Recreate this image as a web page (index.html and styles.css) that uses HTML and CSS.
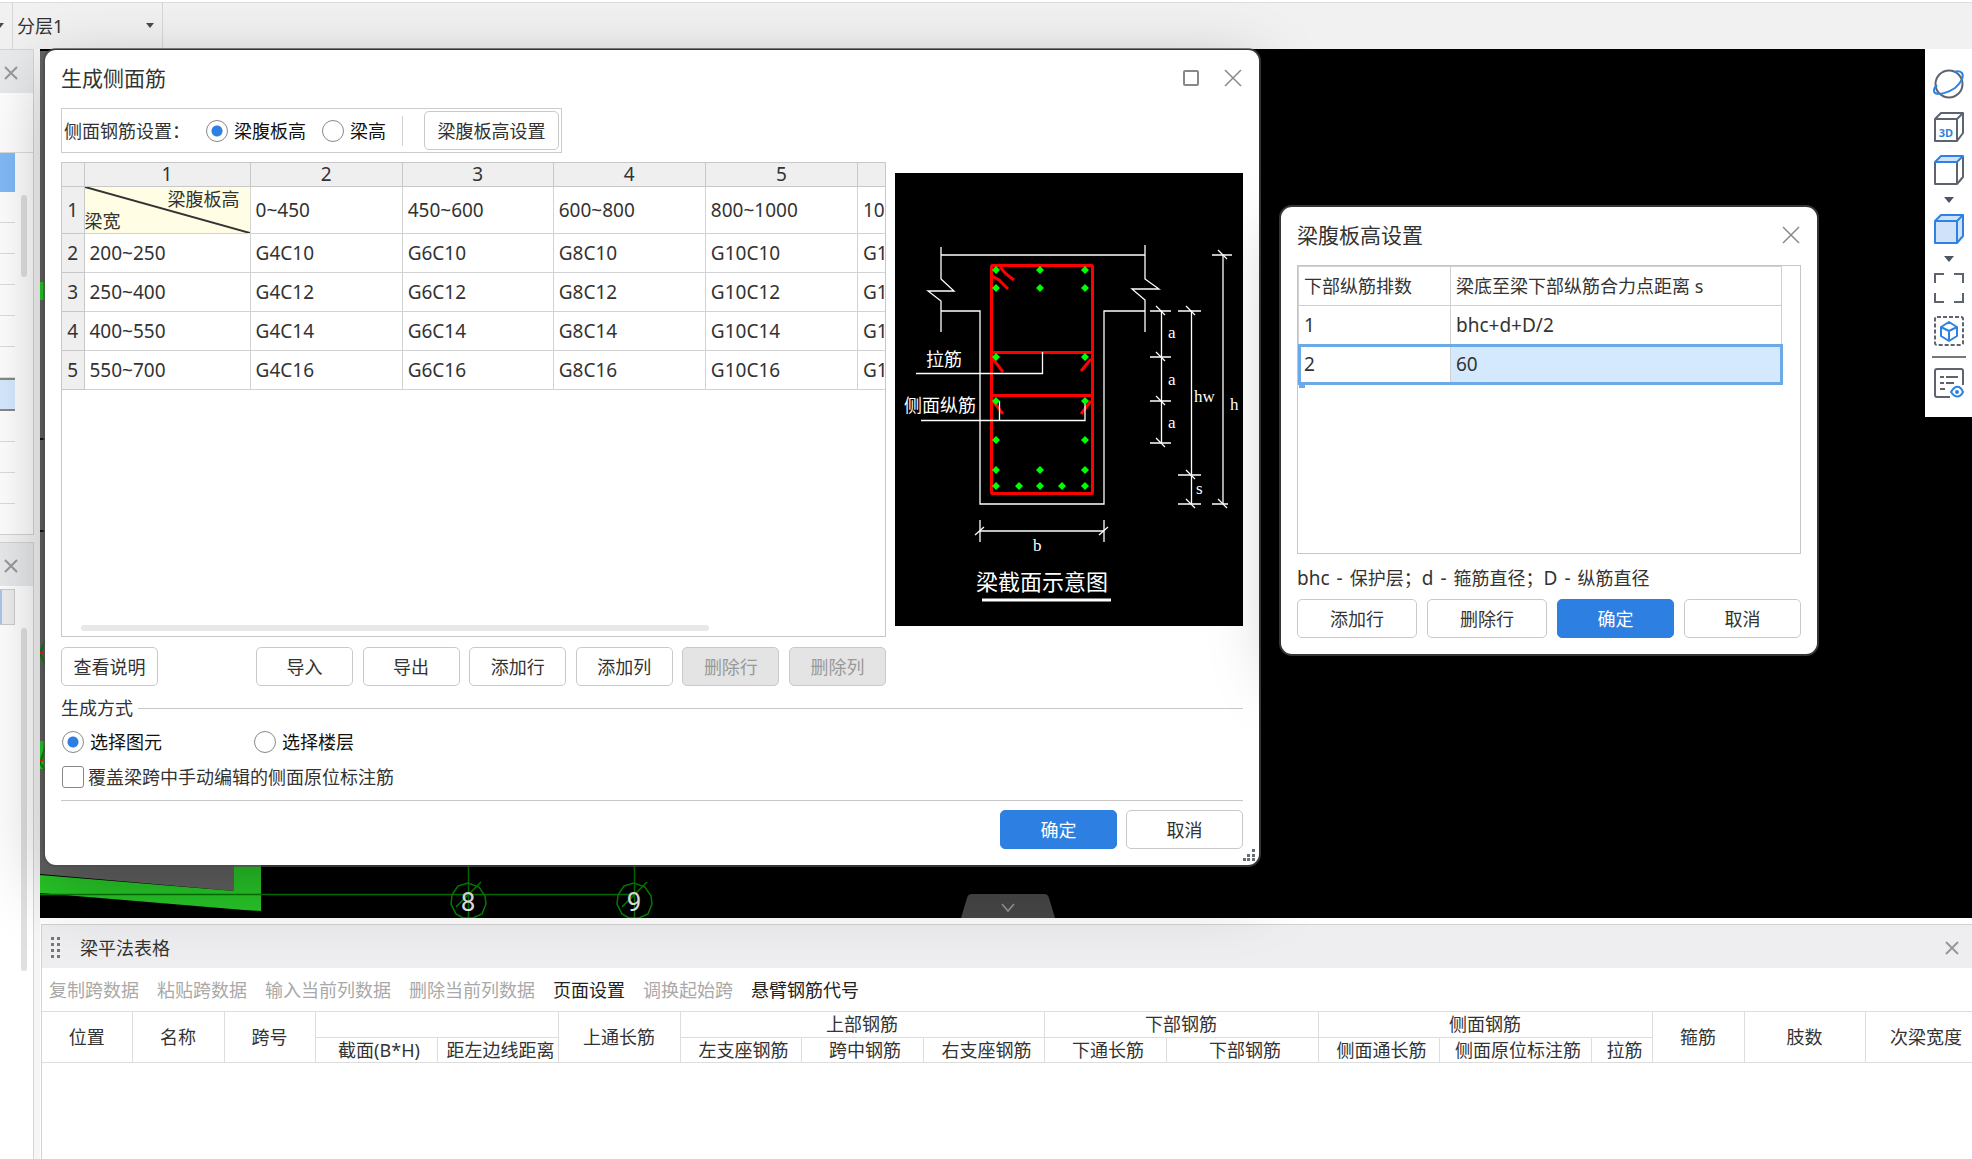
FILE: index.html
```html
<!DOCTYPE html>
<html lang="zh-CN">
<head>
<meta charset="utf-8">
<title>生成侧面筋</title>
<link rel="stylesheet" href="styles.css">
</head>
<body>
<div class="app">
  <header class="topbar">
    <span class="combo-end"><svg width="8" height="5" viewBox="0 0 8 5"><path d="M0 0h8L4 5z" fill="#444b57"/></svg></span>
    <label class="combo">
      <select aria-label="分层"><option>分层1</option></select>
      <svg width="8" height="5" viewBox="0 0 8 5"><path d="M0 0h8L4 5z" fill="#444b57"/></svg>
    </label>
  </header>

  <div class="workspace">
    <aside class="dock">
      <section class="dock-panel dock-upper">
        <div class="dock-head"><button class="x-btn" aria-label="关闭"><svg width="14" height="14" viewBox="0 0 14 14"><path d="M1 1l12 12M13 1L1 13"/></svg></button></div>
        <div class="dock-body">
          <div class="dock-list">
            <div class="gap"></div><div class="on"></div><div></div><div></div><div></div><div></div><div></div><div></div><div class="cur"></div><div></div><div></div><div></div>
          </div>
          <div class="scroll-v short"></div>
        </div>
      </section>
      <section class="dock-panel dock-lower">
        <div class="dock-head"><button class="x-btn" aria-label="关闭"><svg width="14" height="14" viewBox="0 0 14 14"><path d="M1 1l12 12M13 1L1 13"/></svg></button></div>
        <div class="dock-body">
          <div class="dock-tool"></div>
          <div class="scroll-v long"></div>
        </div>
      </section>
    </aside>

    <main class="center">
      <div class="viewport">
        <svg class="drawing" width="640" height="867" viewBox="0 0 640 867">
          <path d="M0 0H194V840L0 823z" fill="#626262"/>
          <path d="M0 231h8v18H0zM0 690h8v28H0z" fill="#28c828"/>
          <path d="M0 388h6M0 480h6" stroke="#111" stroke-width="2"/>
          <path d="M6 588L0 602l6 14M6 694l-6 18 6 8" fill="none" stroke="#0a7a0a" stroke-width="2"/>
          <path d="M0 602h3M0 709h3" stroke="#e02020" stroke-width="2"/>
          <path d="M0 824L194 840V800H221V860L204 859L0 842z" fill="#28c828"/>
          <g fill="none" stroke="#008a00" stroke-width="1.500">
            <path d="M0 843.500H594M428.500 800V867M594.500 800V867" stroke="#007800"/>
            <path d="M418 835l10-3 11 4 6 9 1 8-4 10-9 4h-10l-7-4-5-10 1-9zM416 856l25-25"/>
            <path d="M584 835l10-3 11 4 6 9 1 8-4 10-9 4h-10l-7-4-5-10 1-9zM582 856l25-25"/>
          </g>
          <text x="428" y="860" class="axis-no">8</text>
          <text x="594" y="860" class="axis-no">9</text>
        </svg>
        <button class="collapse" aria-label="收起"><svg width="94" height="24" viewBox="0 0 94 24"><path d="M0 24L6 4Q7 0 11 0H83Q87 0 88 4L94 24z" fill="#484848"/><path d="M41 10l6 7 6-7" fill="none" stroke="#999" stroke-width="1.500"/></svg></button>
        <nav class="view-tools" aria-label="视图">
          <button aria-label="动态观察"><svg width="34" height="32" viewBox="0 0 34 32"><g fill="none" stroke-width="2"><circle cx="17" cy="16" r="13.500" stroke="#5d6470"/><path d="M5 17c-3 3-4 6-2 8 4 2 13 0 20-5 7-6 9-12 7-15-2-2-5-2-8-1" stroke="#2d82e4"/></g></svg></button>
          <button aria-label="三维"><svg width="34" height="32" viewBox="0 0 34 32"><path d="M3 8h22v22H3zM3 8l6-6h22l-6 6M31 2v20l-6 8" fill="none" stroke="#5d6470" stroke-width="2" stroke-linejoin="round"/><text x="14" y="26" class="icon-3d">3D</text></svg></button>
          <button aria-label="俯视"><svg width="34" height="32" viewBox="0 0 34 32"><g stroke-width="2" stroke-linejoin="round"><path d="M3 8v22h22V8M31 3v20l-6 7" fill="none" stroke="#5d6470"/><path d="M3 8l6-6h22l-6 6z" fill="#cfe2fa" stroke="#2d82e4"/></g></svg></button>
          <button class="drop" aria-label="更多视角"><svg width="10" height="6" viewBox="0 0 10 6"><path d="M0 0h10L5 6z" fill="#4d5563"/></svg></button>
          <button aria-label="着色"><svg width="34" height="32" viewBox="0 0 34 32"><path d="M3 8l6-6h22v21l-6 7H3zM3 8h22v22M25 8l6-6" fill="#cfe2fa" stroke="#2d82e4" stroke-width="2" stroke-linejoin="round"/></svg></button>
          <button class="drop" aria-label="更多样式"><svg width="10" height="6" viewBox="0 0 10 6"><path d="M0 0h10L5 6z" fill="#4d5563"/></svg></button>
          <button aria-label="全屏"><svg width="34" height="32" viewBox="0 0 34 32"><path d="M3 11V2h9M22 2h9v9M31 21v9h-9M12 30H3v-9" fill="none" stroke="#5d6470" stroke-width="2"/></svg></button>
          <button aria-label="局部三维"><svg width="34" height="32" viewBox="0 0 34 32"><rect x="3" y="2" width="28" height="28" rx="2" fill="none" stroke="#5d6470" stroke-width="2" stroke-dasharray="4 2"/><path d="M17 7l8 5v9l-8 5-8-5v-9zM9 12l8 4 8-4M17 16v10" fill="none" stroke="#2d82e4" stroke-width="2" stroke-linejoin="round"/></svg></button>
          <hr>
          <button aria-label="显示设置"><svg width="34" height="32" viewBox="0 0 34 32"><path d="M18 30H5q-2 0-2-2V4q0-2 2-2h24q2 0 2 2v14M8 10h4M14 10h12M8 16h4M14 16h8M8 22h5" fill="none" stroke="#5d6470" stroke-width="2"/><path d="M19 25c4-7 9-7 12 0-3 6-8 6-12 0z" fill="none" stroke="#2d82e4" stroke-width="2"/><circle cx="25" cy="25" r="2" fill="#2d82e4"/></svg></button>
        </nav>
      </div>

      <section class="sheet">
        <div class="sheet-head">
          <svg width="10" height="22" viewBox="0 0 10 22" fill="#777"><path d="M0 0h3v3H0zM6 0h3v3H6zM0 6h3v3H0zM6 6h3v3H6zM0 12h3v3H0zM6 12h3v3H6zM0 18h3v3H0zM6 18h3v3H6z"/></svg>
          <h2>梁平法表格</h2>
          <button class="x-btn" aria-label="关闭"><svg width="14" height="14" viewBox="0 0 14 14"><path d="M1 1l12 12M13 1L1 13"/></svg></button>
        </div>
        <div class="sheet-tools">
          <button disabled>复制跨数据</button><button disabled>粘贴跨数据</button><button disabled>输入当前列数据</button><button disabled>删除当前列数据</button><button>页面设置</button><button disabled>调换起始跨</button><button>悬臂钢筋代号</button>
        </div>
        <div class="sheet-scroll">
          <table>
            <colgroup><col class="w90"><col class="w92"><col class="w91"><col class="w122"><col class="w121"><col class="w122"><col class="w121"><col class="w122"><col class="w121"><col class="w122"><col class="w152"><col class="w121"><col class="w152"><col class="w61"><col class="w92"><col class="w121"><col class="w122"></colgroup>
            <thead>
              <tr><th rowspan="2">位置</th><th rowspan="2">名称</th><th rowspan="2">跨号</th><th colspan="2"></th><th rowspan="2">上通长筋</th><th colspan="3">上部钢筋</th><th colspan="2">下部钢筋</th><th colspan="3">侧面钢筋</th><th rowspan="2">箍筋</th><th rowspan="2">肢数</th><th rowspan="2">次梁宽度</th></tr>
              <tr class="sub"><th>截面(B*H)</th><th>距左边线距离</th><th>左支座钢筋</th><th>跨中钢筋</th><th>右支座钢筋</th><th>下通长筋</th><th>下部钢筋</th><th>侧面通长筋</th><th>侧面原位标注筋</th><th>拉筋</th></tr>
            </thead>
          </table>
        </div>
      </section>
    </main>
  </div>

  <section class="dialog dialog-main" role="dialog" aria-labelledby="t1">
    <div class="titlebar">
      <h1 id="t1">生成侧面筋</h1>
      <button class="max-btn" aria-label="最大化"></button>
      <button class="x-btn" aria-label="关闭"><svg width="18" height="18" viewBox="0 0 18 18"><path d="M1 1l16 16M17 1L1 17"/></svg></button>
    </div>
    <div class="options">
      <span class="options-name">侧面钢筋设置：</span>
      <label class="choice"><input type="radio" name="mode" checked>梁腹板高</label>
      <label class="choice"><input type="radio" name="mode">梁高</label>
      <i class="sep"></i>
      <button class="btn wide">梁腹板高设置</button>
    </div>
    <div class="body">
      <div class="left">
        <div class="grid-frame">
          <table class="grid">
            <colgroup><col class="c-no"><col class="c-first"><col class="w152"><col class="w151"><col class="w152"><col class="w152"><col class="w152"></colgroup>
            <thead><tr><th></th><th>1</th><th>2</th><th>3</th><th>4</th><th>5</th><th></th></tr></thead>
            <tbody>
              <tr class="first"><th>1</th><td class="corner"><svg class="slash" viewBox="0 0 165 46" preserveAspectRatio="none"><path d="M0 0L165 46"/></svg><div><span class="across">梁腹板高</span><span>梁宽</span></div></td><td>0~450</td><td>450~600</td><td>600~800</td><td>800~1000</td><td>1000~1200</td></tr>
              <tr><th>2</th><td>200~250</td><td>G4C10</td><td>G6C10</td><td>G8C10</td><td>G10C10</td><td>G12C10</td></tr>
              <tr><th>3</th><td>250~400</td><td>G4C12</td><td>G6C12</td><td>G8C12</td><td>G10C12</td><td>G12C12</td></tr>
              <tr><th>4</th><td>400~550</td><td>G4C14</td><td>G6C14</td><td>G8C14</td><td>G10C14</td><td>G12C14</td></tr>
              <tr><th>5</th><td>550~700</td><td>G4C16</td><td>G6C16</td><td>G8C16</td><td>G10C16</td><td>G12C16</td></tr>
            </tbody>
          </table>
          <div class="scroll-h"></div>
        </div>
        <div class="actions">
          <button class="btn">查看说明</button>
          <div class="edit-actions"><button class="btn">导入</button><button class="btn">导出</button><button class="btn">添加行</button><button class="btn">添加列</button><button class="btn" disabled>删除行</button><button class="btn" disabled>删除列</button></div>
        </div>
      </div>
      <svg class="figure" width="348" height="453" viewBox="0 0 348 453" role="img" aria-label="梁截面示意图">
        <rect width="348" height="453" fill="#000"/>
        <g fill="none" stroke="#fff" stroke-width="1.300">
          <path d="M46 74V106L59 118H33L46 128V159M250 72V106L264 116H237L250 127V159M46 82H250M46 138H85V331H209V138H250"/>
        </g>
        <g fill="none" stroke="#f00" stroke-width="3">
          <rect x="96.500" y="92.500" width="101" height="228" rx="1"/>
          <path d="M96 179.500H197M96 222.500H197"/>
          <path d="M105 94l6 7 8 6M97 103l7 4 9 9M98 186l10 13M196 186l-10 12M98 228l10 13M196 228l-10 13"/>
        </g>
        <g fill="none" stroke="#fff" stroke-width="1.300">
          <path d="M21 200.500H147.500V179M26 247.500H190V228M104.500 247V228"/>
          <path d="M266.500 138V270M296.500 138V331M328 82V331M85 358H209M85 347v22M209 347v22"/>
          <path d="M255 138h21M255 184h21M255 228h21M255 270h21M283 138h23M283 302h23M283 331h23M317 82h20M317 331h16"/>
          <path d="M261 133l9 9M261 179l9 9M261 223l9 9M261 265l9 9M291 133l9 9M291 297l9 9M291 326l9 9M323 77l9 9M323 326l9 9M80 362l9-8M204 362l9-8"/>
        </g>
        <path d="M87 427H216" stroke="#fff" stroke-width="3"/>
        <g fill="#0f0">
          <path d="M101 93l4 4-4 4-4-4zM145 93l4 4-4 4-4-4zM190 93l4 4-4 4-4-4zM101 111l4 4-4 4-4-4zM145 111l4 4-4 4-4-4zM190 111l4 4-4 4-4-4z"/>
          <path d="M101 180l4 4-4 4-4-4zM190 180l4 4-4 4-4-4zM101 224l4 4-4 4-4-4zM190 224l4 4-4 4-4-4zM101 263l4 4-4 4-4-4zM190 263l4 4-4 4-4-4z"/>
          <path d="M101 293l4 4-4 4-4-4zM145 293l4 4-4 4-4-4zM190 293l4 4-4 4-4-4zM101 309l4 4-4 4-4-4zM124 309l4 4-4 4-4-4zM145 309l4 4-4 4-4-4zM167 309l4 4-4 4-4-4zM190 309l4 4-4 4-4-4z"/>
        </g>
        <g class="fig-cn"><text x="31" y="193">拉筋</text><text x="9" y="239">侧面纵筋</text><text x="81" y="417" class="fig-title">梁截面示意图</text></g>
        <g class="fig-dim"><text x="273" y="165">a</text><text x="273" y="212">a</text><text x="273" y="255">a</text><text x="299" y="229">hw</text><text x="335" y="237">h</text><text x="301" y="321">s</text><text x="138" y="378">b</text></g>
      </svg>
    </div>
    <fieldset class="how">
      <legend>生成方式</legend>
      <div class="how-row">
        <label class="choice"><input type="radio" name="how" checked>选择图元</label>
        <label class="choice"><input type="radio" name="how">选择楼层</label>
      </div>
      <label class="choice tick"><input type="checkbox">覆盖梁跨中手动编辑的侧面原位标注筋</label>
    </fieldset>
    <div class="footer"><button class="btn primary">确定</button><button class="btn big">取消</button></div>
    <svg class="grip" width="12" height="12" viewBox="0 0 12 12" fill="#666d76"><path d="M9 0h3v3H9zM9 5h3v3H9zM4 5h3v3H4zM9 9h3v3H9zM4 9h3v3H4zM0 9h3v3H0z"/></svg>
  </section>

  <section class="dialog dialog-set" role="dialog" aria-labelledby="t2">
    <div class="titlebar">
      <h1 id="t2">梁腹板高设置</h1>
      <button class="x-btn" aria-label="关闭"><svg width="18" height="18" viewBox="0 0 18 18"><path d="M1 1l16 16M17 1L1 17"/></svg></button>
    </div>
    <div class="set-frame">
      <table class="set">
        <thead><tr><th>下部纵筋排数</th><th>梁底至梁下部纵筋合力点距离 s</th></tr></thead>
        <tbody>
          <tr><td>1</td><td>bhc+d+D/2</td></tr>
          <tr class="picked"><td>2</td><td>60</td></tr>
        </tbody>
      </table>
      <i class="handle"></i>
    </div>
    <p class="note"><span><b>bhc</b><b>-</b>保护层；</span><span><b>d</b><b>-</b>箍筋直径；</span><span><b>D</b><b>-</b>纵筋直径</span></p>
    <div class="set-actions"><button class="btn">添加行</button><button class="btn">删除行</button><button class="btn primary">确定</button><button class="btn">取消</button></div>
  </section>
</div>
</body>
</html>
```
FILE: styles.css
```css
* { box-sizing: border-box; }
body { margin: 0; font: 18px/24px "Noto Sans", "Noto Sans CJK SC", sans-serif; color: #333; background: #fff; }
button, select, input { font: inherit; color: inherit; margin: 0; }
button { padding: 0; border: 0; background: none; white-space: nowrap; }
h1, h2, p { margin: 0; font-weight: 400; }
svg { display: block; flex: none; }
table { border-collapse: collapse; table-layout: fixed; }
th, td { padding: 0; font-weight: 400; white-space: nowrap; }

.app { position: relative; display: flex; flex-direction: column; min-height: 100vh; overflow: hidden; }

.topbar { display: flex; height: 49px; background: #f1f1f1; border-top: 2px solid #fff; box-shadow: inset 0 1px #ddd; }
.combo-end { display: flex; align-items: center; width: 13px; border-right: 1px solid #d6d6d6; overflow: hidden; }
.combo-end svg { margin-left: -4px; }
.combo { display: flex; align-items: center; width: 150px; padding: 0 8px 0 4px; border-right: 1px solid #d6d6d6; }
.combo select { flex: 1; appearance: none; border: 0; background: none; padding: 0; }

.workspace { display: flex; flex: 1; }
.dock { display: flex; flex-direction: column; gap: 7px; width: 40px; background: #f6f6f6; }
.dock-panel { width: 34px; border: 1px solid #d5d5d5; border-left: 0; background: #fff; }
.dock-upper { height: 486px; }
.dock-lower { flex: 1; border-bottom: 0; }
.dock-head { display: flex; align-items: center; height: 43px; padding: 2px 0 0 4px; background: #e9eaec; }
.x-btn svg { fill: none; stroke: #999; stroke-width: 2; }
.dock-body { display: flex; justify-content: space-between; padding-right: 6px; }
.dock-list { width: 15px; }
.dock-list div { height: 31px; border-bottom: 1px solid #ddd; }
.dock-list .gap { width: 33px; height: 60px; }
.dock-list .on { height: 39px; background: #82bbf8; border: 0; }
.dock-list .cur { height: 33px; background: #d6eaff; border-top: 2px solid #888; border-bottom: 2px solid #888; }
.scroll-v { width: 6px; border-radius: 3px; background: #e0e0e0; }
.scroll-v.short { height: 82px; margin-top: 102px; }
.scroll-v.long { height: 343px; margin-top: 42px; }
.dock-tool { width: 15px; height: 36px; margin-top: 3px; border: 1px solid #ccc; border-left: 2px solid #a9c6ea; background: #eee; }

.center { display: flex; flex: 1; flex-direction: column; min-width: 0; }
.viewport { position: relative; flex: 1; margin-bottom: 6px; background: #000; }
.drawing { position: absolute; left: 0; bottom: 0; }
.axis-no { font: 26px Roboto, sans-serif; fill: #eee; text-anchor: middle; }
.collapse { position: absolute; left: 50%; bottom: 0; margin-left: -45px; }
.view-tools { position: absolute; right: 0; top: 0; display: flex; flex-direction: column; align-items: center; gap: 11px; width: 47px; padding: 19px 0 18px; background: #fff; }
.view-tools .drop { height: 5px; }
.view-tools hr { width: 34px; height: 2px; margin: -2px 0; border: 0; background: #777; }
.icon-3d { font: bold 11px "Noto Sans", sans-serif; fill: #2d82e4; text-anchor: middle; }

.sheet { height: 235px; margin-left: 1px; border: 1px solid #d2d2d2; border-right: 0; border-bottom: 0; background: #fff; }
.sheet-head { display: flex; align-items: center; height: 43px; padding: 2px 13px 0 9px; background: #eeeef0; }
.sheet-head h2 { flex: 1; margin-left: 19px; font-size: 18px; }
.sheet-tools { display: flex; align-items: center; gap: 18px; height: 43px; padding-left: 7px; overflow: hidden; }
.sheet-tools button { color: #222; }
.sheet-tools button:disabled { color: #a9a9a9; }
.sheet-scroll { overflow: hidden; border-top: 1px solid #ddd; }
.sheet table { width: 1945px; }
.sheet th { height: 25px; line-height: 24px; border: 1px solid #ddd; border-top: 0; border-left: 0; }
.sheet .sub th { padding-left: 6px; }
.w61 { width: 61px; } .w90 { width: 90px; } .w91 { width: 91px; } .w92 { width: 92px; } .w121 { width: 121px; } .w122 { width: 122px; } .w151 { width: 151px; } .w152 { width: 152px; }

.dialog { position: absolute; background: #fff; border-radius: 11px; box-shadow: 0 0 0 2px rgba(75, 75, 75, .7), 0 22px 70px rgba(0, 0, 0, .28); }
.dialog-main { left: 45px; top: 50px; width: 1214px; padding: 0 16px 16px; }
.dialog-set { left: 1281px; top: 207px; width: 536px; padding: 0 16px 16px; }
.titlebar { display: flex; align-items: center; height: 58px; padding-bottom: 3px; }
.titlebar h1 { flex: 1; font-size: 21px; line-height: 30px; }
.titlebar .x-btn { margin-right: 1px; }
.titlebar svg { stroke-width: 1.5; stroke: #888; }
.max-btn { width: 16px; height: 16px; margin-right: 25px; border: 2px solid #888; border-radius: 2px; }

.btn { width: 97px; height: 39px; border: 1px solid #c9c9c9; border-radius: 5px; background: #fff; color: #333; }
.btn:disabled { background: #e4e4e4; color: #999; }
.btn.wide { width: 135px; }
.btn.big { width: 117px; }
.btn.primary { width: 117px; border-color: #2d7fe2; background: #2d7fe2; color: #fff; }

.options { display: flex; align-items: center; width: 501px; height: 45px; padding: 0 2px; border: 1px solid #c8cdd2; }
.options-name { width: 142px; }
.choice { display: flex; align-items: center; gap: 6px; height: 22px; color: #111; white-space: nowrap; }
.options .choice { margin-right: 16px; }
.choice input { appearance: none; flex: none; width: 22px; height: 22px; border: 1px solid #888; border-radius: 50%; background: #fff; }
.choice input:checked { background: radial-gradient(circle, #2d7fe2 5px, #fff 6px); }
.choice input[type="checkbox"] { border-radius: 3px; }
.sep { width: 1px; height: 30px; margin-right: auto; background: #d0d0d0; }

.body { display: flex; gap: 9px; margin-top: 9px; }
.left { flex: 1; min-width: 0; }
.figure { margin-top: 11px; }
.grid-frame { display: flex; flex-direction: column; height: 475px; border: 1px solid #c8c8c8; overflow: hidden; }
.grid { width: 948px; font-size: 19px; }
.c-no { width: 22px; }
.c-first { width: 166px; }
.grid th { border: 1px solid #c8c8c8; background: #efefef; }
.grid thead th { height: 23px; line-height: 22px; border-top: 0; }
.grid th:first-child { border-left: 0; }
.grid td { height: 39px; padding-left: 5px; border: 1px solid #d3d3d3; }
.grid .first td { height: 47px; }
.grid .first .corner { position: relative; padding: 0; background: #fffde3; }
.slash { position: absolute; left: 0; top: 0; width: 100%; height: 100%; fill: none; stroke: #333; stroke-width: 2; }
.corner div { display: flex; flex-direction: column; font-size: 18px; line-height: 22px; }
.corner .across { align-self: flex-end; padding-right: 10px; }
.scroll-h { width: 628px; height: 6px; margin: auto 0 5px 19px; border-radius: 3px; background: #e8e8e8; }
.actions { display: flex; justify-content: space-between; margin-top: 10px; }
.edit-actions { display: flex; justify-content: space-between; width: 630px; }

.how { margin: 9px 0 0; padding: 10px 0 12px 1px; border: 0; border-top: 1px solid #c8c8c8; min-width: 0; }
.how legend { margin-left: -1px; padding: 0 5px 0 0; line-height: 26px; }
.how-row { display: grid; grid-template-columns: 192px 1fr; margin-bottom: 13px; }
.how .tick { gap: 4px; color: #333; }
.footer { display: flex; justify-content: flex-end; gap: 9px; padding-top: 9px; border-top: 1px solid #c8c8c8; }
.grip { position: absolute; right: 4px; bottom: 4px; }

.set-frame { position: relative; height: 289px; border: 1px solid #c6c6c6; }
.set { width: 484px; text-align: left; }
.set th, .set td { height: 39px; padding-left: 5px; border: 1px solid #d0d0d0; }
.set th:first-child { width: 152px; }
.set td { font-size: 19px; }
.picked { outline: 3px solid #6ba9e8; outline-offset: -2px; }
.picked td:last-child { background: #d5e9fe; }
.handle { position: absolute; left: 1px; top: 116px; width: 6px; height: 6px; background: #6ba9e8; }
.note { display: flex; margin: 12px 0 9px; line-height: 24px; }
.note span { display: flex; gap: 7px; }
.note b { font-size: 19px; font-weight: 400; }
.set-actions { display: grid; grid-template-columns: 120px 120px 117px 117px; justify-content: space-between; }
.set-actions .btn { width: 100%; }

.fig-cn text { font: 18px "Noto Sans CJK SC", sans-serif; fill: #fff; }
.fig-cn .fig-title { font-size: 22px; }
.fig-dim text { font: 17px "Liberation Serif", serif; fill: #fff; }
```
